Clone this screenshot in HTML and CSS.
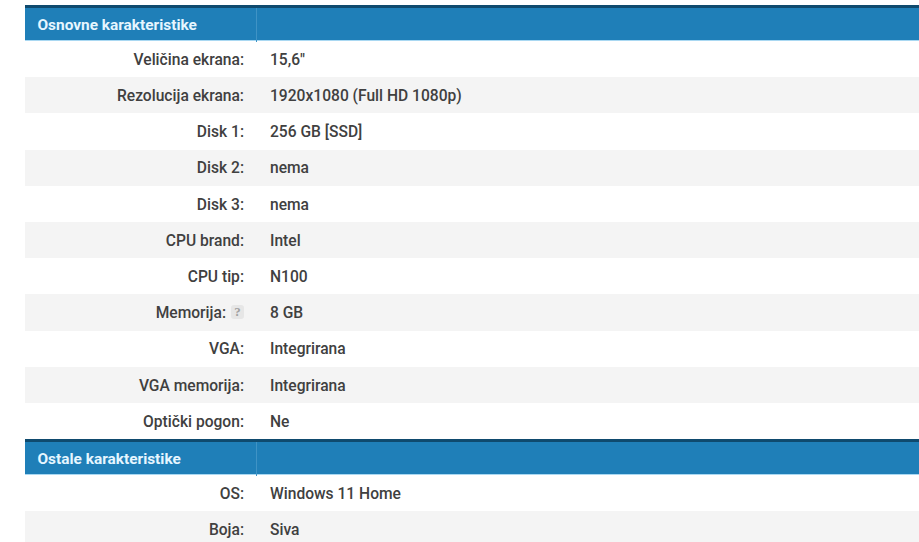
FILE: index.html
```html
<!DOCTYPE html>
<html lang="hr">
<head>
<meta charset="utf-8">
<title>Karakteristike</title>
<link rel="stylesheet" href="styles.css">
</head>
<body>
<div class="specs">
  <section class="group">
    <h2 class="head"><span class="head-title">Osnovne karakteristike</span><span class="head-rest"></span></h2>
    <div class="row"><div class="label">Veličina ekrana:</div><div class="value">15,6"</div></div>
    <div class="row"><div class="label">Rezolucija ekrana:</div><div class="value">1920x1080 (Full HD 1080p)</div></div>
    <div class="row"><div class="label">Disk 1:</div><div class="value">256 GB [SSD]</div></div>
    <div class="row"><div class="label">Disk 2:</div><div class="value">nema</div></div>
    <div class="row"><div class="label">Disk 3:</div><div class="value">nema</div></div>
    <div class="row"><div class="label">CPU brand:</div><div class="value">Intel</div></div>
    <div class="row"><div class="label">CPU tip:</div><div class="value">N100</div></div>
    <div class="row"><div class="label">Memorija:<span class="help">?</span></div><div class="value">8 GB</div></div>
    <div class="row"><div class="label">VGA:</div><div class="value">Integrirana</div></div>
    <div class="row"><div class="label">VGA memorija:</div><div class="value">Integrirana</div></div>
    <div class="row"><div class="label">Optički pogon:</div><div class="value">Ne</div></div>
  </section>
  <section class="group">
    <h2 class="head"><span class="head-title">Ostale karakteristike</span><span class="head-rest"></span></h2>
    <div class="row"><div class="label">OS:</div><div class="value">Windows 11 Home</div></div>
    <div class="row"><div class="label">Boja:</div><div class="value">Siva</div></div>
  </section>
</div>
</body>
</html>
```
FILE: styles.css
```css
html, body {
  margin: 0;
  padding: 0;
  background: #fff;
  overflow: hidden;
}
body {
  height: 542px;
  font-family: Roboto, "Liberation Sans", sans-serif;
}
.specs {
  margin-left: 24.5px;
  padding-top: 5px;
}
.head {
  display: grid;
  grid-template-columns: 232px 1fr;
  height: 32px;
  margin: 0;
  background: #1f7fb8;
  border-top: 3.5px solid #0f4a6e;
  border-bottom: 1px solid #a9d8f2;
  font-size: 15.4px;
  font-weight: 700;
  color: #e6f6ff;
  line-height: 34px;
}
.head-title {
  padding-left: 13px;
  border-right: 1px solid #3f93c5;
}
.row {
  display: grid;
  grid-template-columns: 219.5px 1fr;
  column-gap: 26px;
  box-sizing: border-box;
  height: 36.2px;
  padding-top: 1.5px;
  align-items: center;
  font-size: 15.6px;
  font-weight: 500;
  color: #404040;
}
.row:nth-of-type(even) {
  background: #f4f4f4;
}
.row:nth-of-type(odd) {
  background: #fff;
}
.label {
  text-align: right;
  white-space: nowrap;
}
.help {
  display: inline-block;
  width: 13px;
  height: 14px;
  margin-left: 5px;
  border-radius: 3px;
  background: #e6e6e6;
  color: #a0a0a0;
  font-family: "Liberation Serif", serif;
  font-size: 13px;
  font-weight: 700;
  line-height: 14px;
  text-align: center;
  vertical-align: 2px;
}
```
